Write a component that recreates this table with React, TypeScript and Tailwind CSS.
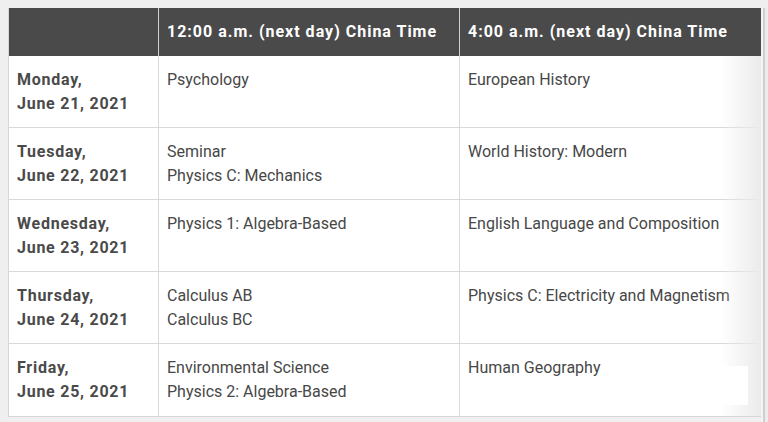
import React from 'react';

type Row = { day: string; date: string; first: string[]; second: string[] };

const ROWS: Row[] = [
  { day: 'Monday,', date: 'June 21, 2021', first: ['Psychology'], second: ['European History'] },
  { day: 'Tuesday,', date: 'June 22, 2021', first: ['Seminar', 'Physics C: Mechanics'], second: ['World History: Modern'] },
  { day: 'Wednesday,', date: 'June 23, 2021', first: ['Physics 1: Algebra-Based'], second: ['English Language and Composition'] },
  { day: 'Thursday,', date: 'June 24, 2021', first: ['Calculus AB', 'Calculus BC'], second: ['Physics C: Electricity and Magnetism'] },
  { day: 'Friday,', date: 'June 25, 2021', first: ['Environmental Science', 'Physics 2: Algebra-Based'], second: ['Human Geography'] },
];

const Lines: React.FC<{ items: string[] }> = ({ items }) => (
  <div className="flex flex-col">
    {items.map((t) => (
      <span key={t}>{t}</span>
    ))}
  </div>
);

const App: React.FC = () => {
  return (
    <div
      className="w-[768px] h-[422px] overflow-hidden bg-[#efefef] pt-2 pl-2 flex"
      style={{ fontFamily: 'Roboto, "Liberation Sans", sans-serif' }}
    >
      <div className="relative w-[753px] h-[409px] bg-white border-l border-b border-[#d6d6d6] flex flex-col">
        {/* Header */}
        <div className="grid grid-cols-[150px_301px_301px] h-12 bg-[#4a4a4a] text-white font-bold text-[16px] tracking-[1px]">
          <div className="border-r border-[#d0d0d0]"></div>
          <div className="flex items-center px-2 border-r border-[#d0d0d0]">12:00 a.m. (next day) China Time</div>
          <div className="flex items-center px-2">4:00 a.m. (next day) China Time</div>
        </div>

        {/* Body */}
        {ROWS.map((r, i) => (
          <div
            key={r.date}
            className={`grid grid-cols-[150px_301px_301px] h-[72px] text-[16px] leading-6 text-[#474747] ${i < ROWS.length - 1 ? 'border-b border-[#d9d9d9]' : ''}`}
          >
            <div className="pt-3 pl-2 border-r border-[#d9d9d9] font-bold tracking-[0.75px] text-[#4a4a4a]">
              <div>{r.day}</div>
              <div>{r.date}</div>
            </div>
            <div className="pt-3 pl-2 border-r border-[#d9d9d9]">
              <Lines items={r.first} />
            </div>
            <div className="pt-3 pl-2">
              <Lines items={r.second} />
            </div>
          </div>
        ))}

        {/* right-edge shading from the photo */}
        <div className="absolute top-12 right-0 bottom-0 w-10 bg-gradient-to-r from-transparent to-[#ebebeb] pointer-events-none"></div>
        <div className="absolute right-[13px] top-[358px] w-[146px] h-[39px] bg-white"></div>
      </div>
      <div className="w-[7px] h-full flex">
        <div className="w-[2px] bg-[#f4f4f4]"></div>
        <div className="w-[2px] bg-[#cfcfcf]"></div>
        <div className="flex-1 bg-[#ececec]"></div>
      </div>
    </div>
  );
};

export default App;
